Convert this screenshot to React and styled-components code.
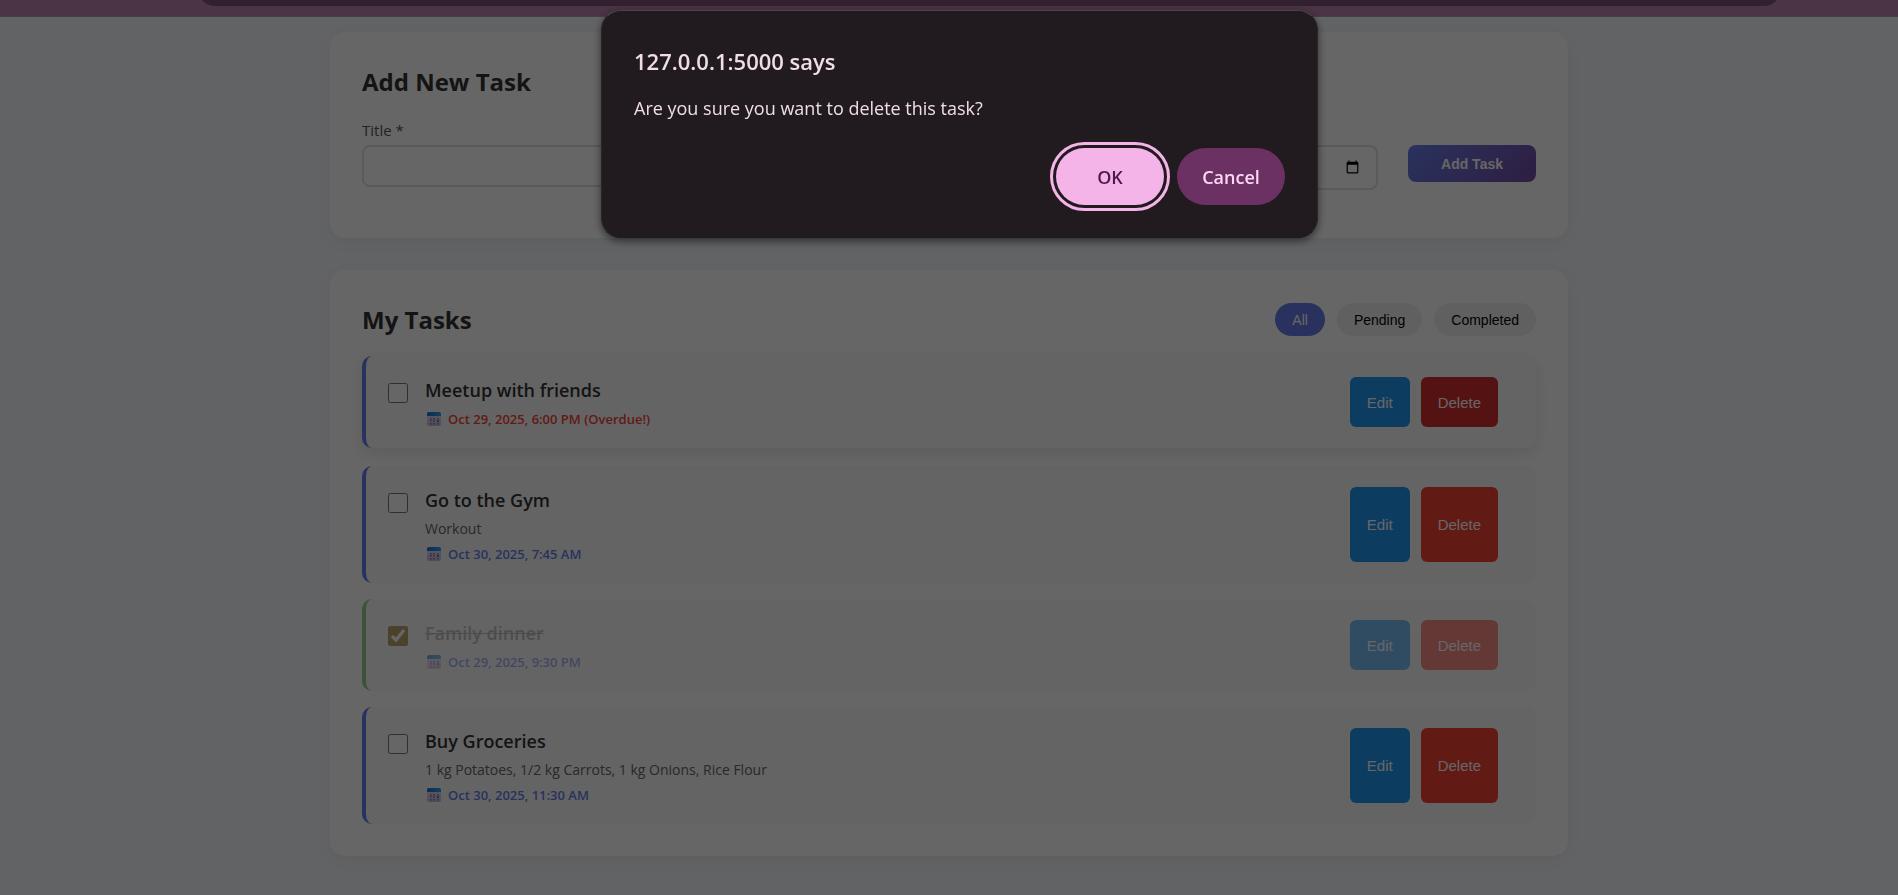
import React, { useState } from "react";
import styled, { createGlobalStyle, css } from "styled-components";

const GlobalStyle = createGlobalStyle`
  * { box-sizing: border-box; }
  body {
    margin: 0;
    min-height: 100vh;
    background: #f5f7fa;
    color: #333;
    font-family: "Open Sans", "Noto Sans", sans-serif;
  }
`;

const BrowserBar = styled.div`
  height: 17px;
  padding: 0 117px 0 198px;
  overflow: hidden;
  background: #bb83ac;
  border-bottom: 1px solid #aa9fa8;
`;

const AddressBar = styled.div`
  height: 34px;
  margin-top: -28px;
  border-radius: 17px;
  background: #805276;
`;

const Page = styled.main`
  width: calc(100% - 40px);
  max-width: 1238px;
  margin: 0 auto;
  padding: 15px 0 32px;
  display: flex;
  flex-direction: column;
  gap: 32px;
`;

const Card = styled.section`
  padding: 32px;
  border-radius: 15px;
  background: #fff;
  box-shadow: 0 4px 15px rgba(0, 0, 0, 0.05);
`;

const Heading = styled.h2`
  margin: 0;
  font-size: 24px;
  line-height: 36px;
  font-weight: 700;
`;

const TaskForm = styled.form`
  display: grid;
  grid-template-columns: 1fr 1fr 1fr auto;
  gap: 30px;
  margin-top: 20px;
`;

const Field = styled.div`
  display: flex;
  flex-direction: column;
  gap: 4px;
  padding-top: ${(p) => (p.$unlabelled ? 25 : 0)}px;
`;

const Label = styled.label`
  font-size: 15px;
  line-height: 21px;
  color: #555;
`;

const inputLook = css`
  width: 100%;
  padding: 11px 14px;
  border: 2px solid #e0e0e0;
  border-radius: 8px;
  background: #fff;
  font-family: "Open Sans", sans-serif;
  font-size: 15px;
`;

const TextInput = styled.input`
  ${inputLook}
  height: ${(p) => (p.type === "text" ? 42 : 45)}px;
`;

const TextArea = styled.textarea`
  ${inputLook}
  height: 61px;
  resize: none;
`;

const AddButton = styled.button`
  height: 37px;
  margin-top: 25px;
  padding: 0 33px;
  border: 0;
  border-radius: 8px;
  background: linear-gradient(135deg, #667eea 0%, #764ba2 100%);
  color: #fff;
  font: bold 14px "Liberation Sans", sans-serif;
`;

const ListHeader = styled.header`
  display: flex;
  justify-content: space-between;
  align-items: flex-start;
  margin-bottom: 20px;
`;

const Filters = styled.div`
  display: flex;
  gap: 12px;
  padding-top: 1px;
`;

const FilterButton = styled.button`
  height: 33px;
  padding: 0 17px;
  border: 0;
  border-radius: 17px;
  background: ${(p) => (p.$active ? "#667eea" : "#f0f0f0")};
  color: ${(p) => (p.$active ? "#fff" : "#000")};
  font: 14px "Liberation Sans", sans-serif;
`;

const TaskList = styled.ul`
  display: flex;
  flex-direction: column;
  gap: 16px;
  margin: 0;
  padding: 0;
  list-style: none;
`;

const TaskRow = styled.li`
  display: flex;
  align-items: stretch;
  gap: 17px;
  padding: 19px 38px 19px 22px;
  border-left: 4px solid ${(p) => (p.$done ? "#4caf50" : "#667eea")};
  border-radius: 10px;
  background: #fafafa;
  opacity: ${(p) => (p.$done ? 0.6 : 1)};
  ${(p) =>
    p.$raised &&
    css`
      transform: translateY(-2px);
      box-shadow: 0 5px 15px rgba(0, 0, 0, 0.1);
    `}
`;

const Check = styled.input`
  flex: none;
  width: 20px;
  height: 20px;
  margin: 8px 0 0;
  accent-color: #8a6a0c;
`;

const TaskBody = styled.div`
  flex: 1;
  min-width: 0;
`;

const TaskTitle = styled.h3`
  margin: 0;
  font-size: 18px;
  line-height: 30px;
  font-weight: 600;
  color: ${(p) => (p.$done ? "#999" : "#333")};
  text-decoration: ${(p) => (p.$done ? "line-through" : "none")};
`;

const TaskNote = styled.p`
  margin: 3px 0 0;
  font-size: 14px;
  line-height: 22px;
  color: #666;
`;

const TaskDue = styled.div`
  display: flex;
  align-items: center;
  gap: 7px;
  margin-top: 4px;
  padding-left: 2px;
  font-size: 13px;
  line-height: 20px;
  font-weight: 600;
  color: ${(p) => (p.$overdue ? "#f44336" : "#667eea")};
`;

const Actions = styled.div`
  display: flex;
  gap: 11px;
  padding: 2px 0;
`;

const ActionButton = styled.button`
  padding: 0 17px;
  border: 0;
  border-radius: 6px;
  background: ${(p) => p.$color};
  color: #fff;
  font: 15px "Liberation Sans", sans-serif;
`;

const Backdrop = styled.div`
  position: fixed;
  inset: 0;
  display: flex;
  justify-content: center;
  align-items: flex-start;
  padding: 10px 0 0 21px;
  background: rgba(0, 0, 0, 0.6);
`;

const Dialog = styled.div`
  width: 100%;
  max-width: 717px;
  padding: 32px;
  border: 1px solid #4b444a;
  border-color: #4b444a #2c2429 #211a1e;
  border-radius: 20px;
  background: #211a1e;
  box-shadow: 0 3px 8px rgba(0, 0, 0, 0.55);
  color: #f0dde9;
`;

const DialogTitle = styled.h1`
  margin: 0;
  font-size: 22px;
  line-height: 36px;
  font-weight: 600;
`;

const DialogText = styled.p`
  margin: 12px 0 23px;
  font-size: 18px;
  line-height: 34px;
`;

const DialogActions = styled.div`
  display: flex;
  justify-content: flex-end;
  gap: 13px;
`;

const DialogButton = styled.button`
  width: 108px;
  height: 57px;
  border: 0;
  border-radius: 29px;
  background: ${(p) => (p.$primary ? "#f4b4e8" : "#6a3162")};
  color: ${(p) => (p.$primary ? "#50194b" : "#ffd7f5")};
  font: 600 18px "Open Sans", sans-serif;
  ${(p) =>
    p.$primary &&
    css`
      outline: 3px solid #f4b4e8;
      outline-offset: 3px;
    `}
`;

function CalendarIcon() {
  return (
    <svg width="14" height="14" viewBox="0 0 14 14" aria-hidden="true">
      <defs>
        <linearGradient id="calTop" x1="0" x2="1">
          <stop offset="0" stopColor="#1f6fd0" />
          <stop offset="1" stopColor="#2ba3f0" />
        </linearGradient>
        <linearGradient id="calPage" x1="0" x2="0" y1="0" y2="1">
          <stop offset="0" stopColor="#e6e2f2" />
          <stop offset="1" stopColor="#cdb4dd" />
        </linearGradient>
      </defs>
      <rect width="14" height="14" rx="2" fill="url(#calPage)" />
      <path d="M0 4V2a2 2 0 0 1 2-2h10a2 2 0 0 1 2 2v2z" fill="url(#calTop)" />
      <g fill="#9a8bb4">
        {[3, 6, 10].map((x) =>
          [6, 8, 11].map((y) => (
            <rect key={`${x}-${y}`} x={x} y={y} width="2" height="1.5" />
          ))
        )}
      </g>
      <rect x="10" y="8" width="2" height="2" fill="#2b88d8" />
    </svg>
  );
}

const tasks = [
  { title: "Meetup with friends", due: "Oct 29, 2025, 6:00 PM (Overdue!)", overdue: true, raised: true },
  { title: "Go to the Gym", note: "Workout", due: "Oct 30, 2025, 7:45 AM" },
  { title: "Family dinner", due: "Oct 29, 2025, 9:30 PM", done: true },
  { title: "Buy Groceries", note: "1 kg Potatoes, 1/2 kg Carrots, 1 kg Onions, Rice Flour", due: "Oct 30, 2025, 11:30 AM" },
];

function Task({ task }) {
  const [done, setDone] = useState(Boolean(task.done));
  return (
    <TaskRow $done={done} $raised={task.raised}>
      <Check
        type="checkbox"
        aria-label={task.title}
        checked={done}
        onChange={(e) => setDone(e.target.checked)}
      />
      <TaskBody>
        <TaskTitle $done={done}>{task.title}</TaskTitle>
        {task.note && <TaskNote>{task.note}</TaskNote>}
        <TaskDue $overdue={task.overdue}>
          <CalendarIcon />
          <span>{task.due}</span>
        </TaskDue>
      </TaskBody>
      <Actions>
        <ActionButton type="button" $color="#2196f3">Edit</ActionButton>
        <ActionButton type="button" $color={task.raised ? "#d32f2f" : "#f44336"}>Delete</ActionButton>
      </Actions>
    </TaskRow>
  );
}

export default function App() {
  const [filter, setFilter] = useState("All");
  return (
    <>
      <GlobalStyle />
      <BrowserBar>
        <AddressBar />
      </BrowserBar>
      <Page>
        <Card>
          <Heading>Add New Task</Heading>
          <TaskForm>
            <Field>
              <Label htmlFor="task-title">Title *</Label>
              <TextInput id="task-title" type="text" />
            </Field>
            <Field $unlabelled>
              <TextArea aria-label="Description" />
            </Field>
            <Field $unlabelled>
              <TextInput type="datetime-local" aria-label="Due date" />
            </Field>
            <AddButton type="button">Add Task</AddButton>
          </TaskForm>
        </Card>
        <Card>
          <ListHeader>
            <Heading>My Tasks</Heading>
            <Filters>
              {["All", "Pending", "Completed"].map((name) => (
                <FilterButton
                  key={name}
                  type="button"
                  $active={filter === name}
                  onClick={() => setFilter(name)}
                >
                  {name}
                </FilterButton>
              ))}
            </Filters>
          </ListHeader>
          <TaskList>
            {tasks.map((task) => (
              <Task key={task.title} task={task} />
            ))}
          </TaskList>
        </Card>
      </Page>
      <Backdrop>
        <Dialog role="alertdialog" aria-labelledby="dialog-title" aria-describedby="dialog-text">
          <DialogTitle id="dialog-title">127.0.0.1:5000 says</DialogTitle>
          <DialogText id="dialog-text">Are you sure you want to delete this task?</DialogText>
          <DialogActions>
            <DialogButton type="button" $primary>OK</DialogButton>
            <DialogButton type="button">Cancel</DialogButton>
          </DialogActions>
        </Dialog>
      </Backdrop>
    </>
  );
}
